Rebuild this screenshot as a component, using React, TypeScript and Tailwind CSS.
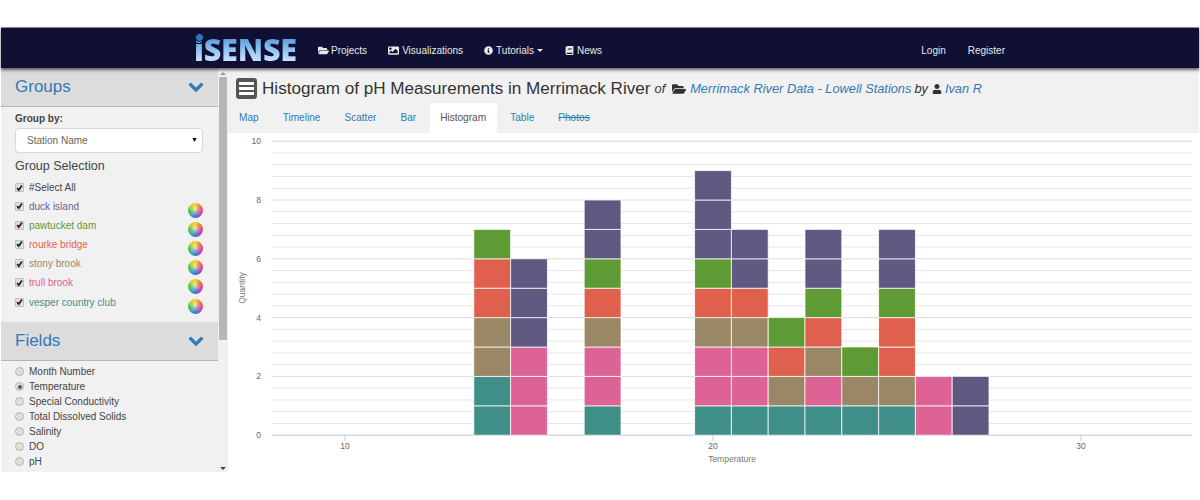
import { FaBook, FaFolderOpen, FaImage, FaInfoCircle, FaUser } from "react-icons/fa";

const C = { t: "#3f8f88", p: "#dc6394", b: "#998765", r: "#df614d", g: "#5f9b35", u: "#5f5880" };
type K = keyof typeof C;

const bars: { bin: number; stack: K[] }[] = [
  { bin: 13.5, stack: ["t", "t", "b", "b", "r", "r", "g"] },
  { bin: 14.5, stack: ["p", "p", "p", "u", "u", "u"] },
  { bin: 16.5, stack: ["t", "p", "p", "b", "r", "g", "u", "u"] },
  { bin: 19.5, stack: ["t", "p", "p", "b", "r", "g", "u", "u", "u"] },
  { bin: 20.5, stack: ["t", "p", "p", "b", "r", "u", "u"] },
  { bin: 21.5, stack: ["t", "b", "r", "g"] },
  { bin: 22.5, stack: ["t", "p", "b", "r", "g", "u", "u"] },
  { bin: 23.5, stack: ["t", "b", "g"] },
  { bin: 24.5, stack: ["t", "b", "r", "r", "g", "u", "u"] },
  { bin: 25.5, stack: ["p", "p"] },
  { bin: 26.5, stack: ["u", "u"] },
];

const X = (v: number) => 345 + (v - 10) * 36.8;
const Y = (v: number) => 435.2 - v * 29.4;

function Chart() {
  const grid = Array.from({ length: 26 }, (_, i) => i * 0.4);
  return (
    <svg viewBox="228 133 972 339" className="block w-[972px] h-[339px]">
      {grid.map((v, i) => (
        <line key={i} x1={272} x2={1192} y1={Y(v)} y2={Y(v)} stroke={i === 0 ? "#c0c8d8" : i % 5 === 0 ? "#dcdcdc" : "#e6e6e6"} strokeWidth={1} />
      ))}
      {bars.map((b) =>
        b.stack.map((k, i) => (
          <rect key={b.bin + "-" + i} x={X(b.bin)} y={Y(i + 1)} width={36.8} height={29.4} fill={C[k]} stroke="#ffffff" strokeOpacity={0.75} strokeWidth={1} />
        ))
      )}
      {[10, 20, 30].map((v) => (
        <g key={v}>
          <line x1={X(v)} x2={X(v)} y1={436} y2={441} stroke="#c0c8d8" />
          <text x={X(v)} y={449} textAnchor="middle" fontSize={8.5} fill="#666" fontFamily="Liberation Sans, sans-serif">{v}</text>
        </g>
      ))}
      {[0, 2, 4, 6, 8, 10].map((v) => (
        <text key={v} x={261} y={Y(v) + 3} textAnchor="end" fontSize={8.5} fill="#666" fontFamily="Liberation Sans, sans-serif">{v}</text>
      ))}
      <text x={732} y={462} textAnchor="middle" fontSize={8.5} fill="#777" fontFamily="Liberation Sans, sans-serif">Temperature</text>
      <text transform="translate(245 288) rotate(-90)" textAnchor="middle" fontSize={8.5} fill="#777" fontFamily="Liberation Sans, sans-serif">Quantity</text>
    </svg>
  );
}

function Check() {
  return (
    <span className="flex w-[9px] h-[9px] shrink-0 items-center justify-center rounded-[1px] border border-[#c0c0c0] bg-[#dedede]">
      <svg viewBox="0 0 10 10" className="w-[8px] h-[8px]"><path d="M1.5 5.2 L4 8 L8.5 1.5" fill="none" stroke="#222" strokeWidth="2.4" /></svg>
    </span>
  );
}

function Radio({ on }: { on?: boolean }) {
  return (
    <span className="flex w-[9px] h-[9px] shrink-0 items-center justify-center rounded-full border border-[#b4b4b4] bg-[#dedede]">
      {on && <span className="w-[4px] h-[4px] rounded-full bg-[#555]" />}
    </span>
  );
}

function Wheel() {
  return (
    <span className="relative block w-[15px] h-[15px] rounded-full bg-[conic-gradient(#f0d020,#ec6a28,#d83c78,#9038b8,#3c60c8,#20a8a8,#48b838,#c0d020,#f0d020)]">
      <span className="absolute inset-0 rounded-full bg-[radial-gradient(circle,rgba(255,255,255,0.6)_0%,rgba(255,255,255,0.1)_55%,rgba(255,255,255,0)_100%)]" />
    </span>
  );
}

function Chevron() {
  return (
    <svg viewBox="0 0 16 10" className="w-[16px] h-[10px]">
      <path d="M1.6 1.6 L8 8 L14.4 1.6" fill="none" stroke="#337ab7" strokeWidth="3.4" />
    </svg>
  );
}

function PanelHead({ title }: { title: string }) {
  return (
    <div className="flex h-[39px] items-center justify-between border-b border-[#b5b5b5] bg-[#dcdcdc] pl-[14px] pr-[14px]">
      <span className="text-[17px] text-[#337ab7]">{title}</span>
      <Chevron />
    </div>
  );
}

const groups = [
  ["duck island", "#6a6390"],
  ["pawtucket dam", "#5f9b35"],
  ["rourke bridge", "#df614d"],
  ["stony brook", "#998765"],
  ["trull brook", "#dc6394"],
  ["vesper country club", "#3f8f88"],
];
const fields = ["Month Number", "Temperature", "Special Conductivity", "Total Dissolved Solids", "Salinity", "DO", "pH"];

function Sidebar() {
  return (
    <div className="flex w-[227px] shrink-0 bg-[#f1f1f1]">
      <div className="w-[217px] shrink-0">
        <PanelHead title="Groups" />
        <div className="h-[215px] pl-[14px] pr-[15px] pt-[5px]">
          <div className="h-[14px] text-[10px] leading-[14px] font-bold text-[#444]">Group by:</div>
          <div className="mt-[2px] flex h-[25px] items-center justify-between rounded-[4px] border border-[#d8d8d8] bg-white pl-[11px] pr-[4px] text-[10px] text-[#666]">
            <span>Station Name</span>
            <span className="text-[7px] text-black">▼</span>
          </div>
          <div className="mt-[5px] h-[16px] text-[12.5px] leading-[16px] text-[#444]">Group Selection</div>
          <div className="mt-[4px] flex h-[19px] items-center gap-[5px] text-[10px] text-[#444]">
            <Check /><span>#Select All</span>
          </div>
          {groups.map(([n, c]) => (
            <div key={n} className="flex h-[19.2px] items-center justify-between">
              <div className="flex items-center gap-[5px] text-[10px] pb-[1px]">
                <Check /><span style={{ color: c }}>{n}</span>
              </div>
              <div className="pt-[7px]"><Wheel /></div>
            </div>
          ))}
        </div>
        <PanelHead title="Fields" />
        <div className="pl-[14px] pt-[3px]">
          {fields.map((f, i) => (
            <div key={f} className="flex h-[15px] items-center gap-[5px] text-[10px] text-[#444]">
              <Radio on={i === 1} /><span>{f}</span>
            </div>
          ))}
        </div>
      </div>
      <div className="flex w-[10px] flex-col items-center justify-between pb-[2px] pt-[4px]">
        <div className="flex flex-col items-center w-full">
          <span className="block w-0 h-0 border-x-[3px] border-x-transparent border-b-[3px] border-b-[#999]" />
          <span className="mt-[2px] block h-[263px] w-[8px] bg-[#b6b6b6]" />
        </div>
        <span className="block w-0 h-0 border-x-[3px] border-x-transparent border-t-[3px] border-t-[#444]" />
      </div>
    </div>
  );
}

function NavLink({ icon, label, caret }: { icon?: React.ReactNode; label: string; caret?: boolean }) {
  return (
    <span className="flex items-center gap-[3px] text-[10px] text-[#e8e8e8]">
      {icon}
      <span>{label}</span>
      {caret && <span className="block w-0 h-0 border-x-[3px] border-x-transparent border-t-[3px] border-t-[#e8e8e8]" />}
    </span>
  );
}

function Logo() {
  return (
    <div className="relative mt-[-2px] w-[103px] h-[26px]">
      <span className="block text-[30.5px] leading-[26px] font-black tracking-[-0.2px] text-transparent bg-clip-text bg-gradient-to-b from-[#4f93d8] via-[#8cc0f0] to-[#cfe6fb] [font-family:'Open_Sans',sans-serif]">iSENSE</span>
      <span className="absolute left-[1px] top-[-3px] w-[9px] h-[9px] rounded-full bg-[#2f78c8] border border-[#0f0f33]" />
    </div>
  );
}

const tabs = ["Map", "Timeline", "Scatter", "Bar", "Histogram", "Table", "Photos"];

export default function App() {
  return (
    <div className="h-[472px] overflow-hidden bg-white pt-[27px] px-px [font-family:'Liberation_Sans',Arial,sans-serif]">
      <div className="flex h-[41px] items-center justify-between border-t border-[#8a8a8a] bg-[#0f1033] pl-[193px] pr-[194px] pt-[4px] shadow-[0_2px_3px_rgba(0,0,0,0.6)] relative z-10">
        <div className="flex items-center">
          <Logo />
          <div className="ml-[20px] flex items-center gap-[21px]">
            <NavLink icon={<FaFolderOpen className="ml-[1px] mr-[-1px] w-[11px] h-[11px]" />} label="Projects" />
            <NavLink icon={<FaImage className="w-[11px] h-[11px]" />} label="Visualizations" />
            <NavLink icon={<FaInfoCircle className="w-[9px] h-[9px]" />} label="Tutorials" caret />
            <NavLink icon={<FaBook className="ml-[1px] w-[9px] h-[9px]" />} label="News" />
          </div>
        </div>
        <div className="flex items-center gap-[22px]">
          <NavLink label="Login" />
          <NavLink label="Register" />
        </div>
      </div>
      <div className="flex h-[404px]">
        <Sidebar />
        <div className="min-w-0 flex-1 bg-[#f1f1f1]">
          <div className="flex h-[35px] items-center pl-[8px] pt-[6px]">
            <span className="flex h-[21px] w-[21px] flex-col items-center justify-center gap-[2px] rounded-[3px] bg-[#555]">
              <span className="block h-[3px] w-[15px] bg-white" />
              <span className="block h-[3px] w-[15px] bg-white" />
              <span className="block h-[3px] w-[15px] bg-white" />
            </span>
            <span className="ml-[5px] text-[17.1px] text-[#333]">Histogram of pH Measurements in Merrimack River</span>
            <span className="ml-[4px] flex items-center text-[12.8px] italic text-[#333]">
              <span>of</span>
              <FaFolderOpen className="ml-[7px] mr-[4px] w-[14px] h-[14px]" />
              <span className="text-[#337ab7]">Merrimack River Data - Lowell Stations</span>
              <span className="ml-[3px]">by</span>
              <FaUser className="ml-[4px] mr-[3px] w-[10px] h-[10px]" />
              <span className="text-[#337ab7]">Ivan R</span>
            </span>
          </div>
          <div className="flex h-[30px] items-stretch gap-[3px] pl-[0.5px]">
            {tabs.map((t) => (
              <span
                key={t}
                className={
                  "flex items-center px-[10.5px] text-[10.1px] " +
                  (t === "Histogram" ? "rounded-t-[3px] bg-white text-[#555]" : "text-[#337ab7]") +
                  (t === "Photos" ? " line-through" : "")
                }
              >
                {t}
              </span>
            ))}
          </div>
          <div className="bg-white h-[339px]">
            <Chart />
          </div>
        </div>
      </div>
    </div>
  );
}
